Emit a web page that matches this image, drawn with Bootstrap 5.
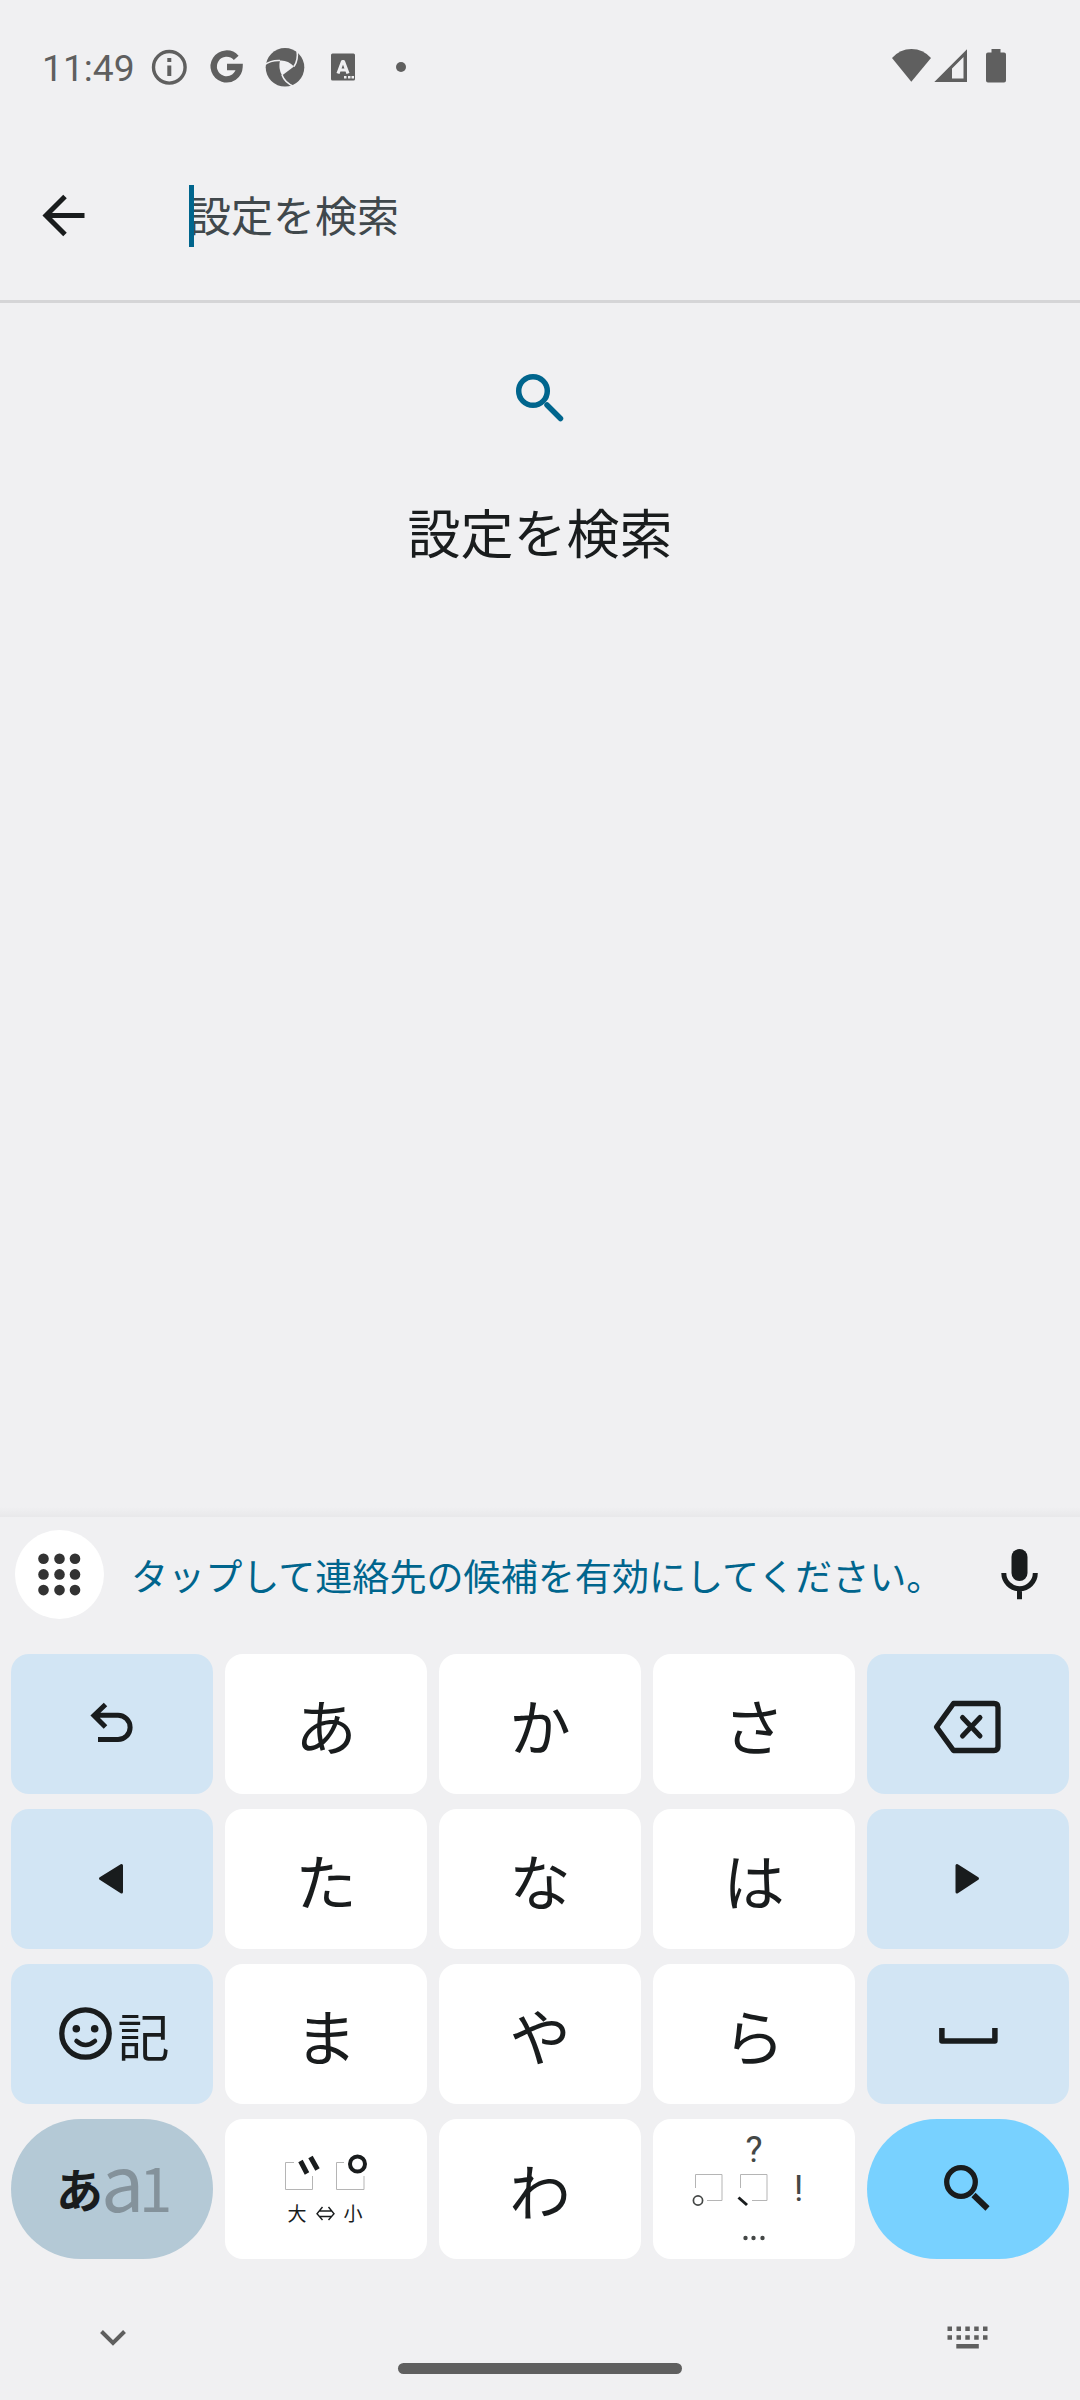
<!DOCTYPE html>
<html lang="ja">
<head>
<meta charset="utf-8">
<meta name="viewport" content="width=device-width, initial-scale=1">
<title>設定を検索</title>
<link href="https://cdn.jsdelivr.net/npm/bootstrap@5.3.0/dist/css/bootstrap.min.css" rel="stylesheet">
<style>
  body { background:#f0f0f2; font-family:Roboto,"Noto Sans CJK JP",sans-serif; color:#191c1d; }
  svg { display:block; flex:none; }
  .screen { width:1080px; height:2400px; overflow:hidden; }
  .status { height:134px; padding-left:42px; color:#5f5f5f; }
  .clock { font-size:37.2px; line-height:44px; width:93px; padding-top:1px; }
  .jp { font-family:"Noto Sans CJK JP",sans-serif; white-space:nowrap; }
  .toolbar { height:169px; padding-bottom:2px; border-bottom:3px solid #d5d5d7; }
  .query { font-size:42px; line-height:58px; height:62px; color:#40484c; margin-left:104px; }
  .caret { left:0; top:0; width:5px; height:62px; background:#00658d; }
  .empty-state { height:1214px; padding-top:54px; background:linear-gradient(to bottom,#f0f0f2 calc(100% - 10px),#e8e8ea); }
  .headline { font-size:53px; line-height:78px; margin-top:55px; }
  .suggest { height:137px; padding-top:13px; padding-left:15px; color:#00658d; }
  .apps { width:89px; height:89px; }
  .hint { font-size:37.1px; line-height:54px; margin-left:27px; margin-top:18px; }
  .keys { padding:0 11px; display:grid; grid-template-columns:repeat(5,202px); gap:15px 12px; }
  .key { height:140px; border:0; border-radius:18px; background:#fff; color:#191c1d; font-size:61.5px; line-height:140px; padding:0; }
  .kana { padding-top:1px; line-height:139px; }
  .key-fn { background:#d2e5f4; }
  .key-mode { background:#b4c9d6; border-radius:70px; }
  .key-go { background:#78d1ff; border-radius:70px; }
  .navbar-sys { height:141px; color:#5f5f5f; }
</style>
</head>
<body>
<main class="screen d-flex flex-column">
  <header class="status d-flex align-items-center">
    <span class="clock">11:49</span>
    <svg width="70" height="48" viewBox="135 43 70 48"><circle cx="169.3" cy="67.3" r="15.8" fill="none" stroke="currentColor" stroke-width="3.4"/><path fill="currentColor" d="M167.3 58h4v4h-4zM167.3 65.5h4V76h-4z"/></svg>
    <svg width="55" height="48" viewBox="205 43 55 48"><path fill="none" stroke="currentColor" stroke-width="6.4" d="M236.2 57.8A12.9 12.9 0 1 0 239.5 67H227"/></svg>
    <svg width="60" height="48" viewBox="260 43 60 48"><circle cx="285" cy="67.3" r="19.3" fill="currentColor"/><path fill="#f0f0f2" d="M280 60.500Q288 60 294 66.500L282 75.500Q278 68 280 60.500z"/><path fill="none" stroke="#f0f0f2" stroke-width="1.600" d="M297 50Q298.500 60 294 66.500M264 65Q271 60 280 60.500M282 75Q285 83 294 86.500"/></svg>
    <svg width="60" height="48" viewBox="320 43 60 48"><rect x="331" y="53.500" width="24" height="27" rx="1.500" fill="currentColor"/><path fill="none" stroke="#f0f0f2" stroke-width="3.200" stroke-linejoin="round" d="M338 73.500L342.500 61.500h1L348 73.500M340 70h6"/><path fill="#f0f0f2" d="M344 76h2.500v2.500h-2.500zM348 76h2.500v2.500h-2.500zM351.500 76h2.500v2.500h-2.500z"/></svg>
    <svg width="40" height="48" viewBox="380 43 40 48"><circle cx="401" cy="67" r="5" fill="currentColor"/></svg>
    <svg class="ms-auto" width="200" height="48" viewBox="880 43 200 48" fill="currentColor"><path d="M911.300 81.700L892 58Q900 49 911.500 49T931 58z"/><path fill-rule="evenodd" d="M934.300 82L967 49.300V82zM952 68.500V78.500H963.500V57z"/><path d="M991.500 49h9v3.500h3.500q2 0 2 2V80.500q0 2-2 2H988q-2 0-2-2V54.500q0-2 2-2h3.500z"/></svg>
  </header>
  <div class="toolbar d-flex align-items-center">
    <svg width="85" height="80" viewBox="0 176 85 80"><path fill="none" stroke="#191c1d" stroke-width="5" d="M84.500 215.500H46M65 196.500L46 215.500 65 234.500"/></svg>
    <div class="query jp position-relative">設定を検索<span class="caret position-absolute"></span></div>
  </div>
  <section class="empty-state d-flex flex-column align-items-center">
    <svg width="80" height="80" viewBox="500 357 80 80" fill="none" stroke="#00658d" stroke-width="5.500"><circle cx="533" cy="391" r="14.300"/><path stroke-linecap="round" d="M547 405L560.500 418.500"/></svg>
    <div class="headline jp">設定を検索</div>
  </section>
  <section class="suggest d-flex align-items-start">
    <div class="apps rounded-circle bg-white"><svg width="89" height="89" viewBox="0 0 89 89" fill="#333"><g id="r"><circle cx="28.500" cy="28.700" r="5.300"/><circle cx="44.500" cy="28.700" r="5.300"/><circle cx="60" cy="28.700" r="5.300"/></g><use href="#r" y="15.700"/><use href="#r" y="31.400"/></svg></div>
    <div class="hint jp">タップして連絡先の候補を有効にしてください。</div>
    <svg class="ms-auto" width="90" height="90" viewBox="990 1530 90 90"><rect x="1011.500" y="1549" width="16" height="32" rx="8" fill="#191c1d"/><path fill="none" stroke="#191c1d" stroke-width="5" d="M1003.800 1573a15.500 15.500 0 0 0 31.500 0M1019.500 1588v11.300"/></svg>
  </section>
  <section class="keys jp">
    <button class="key key-fn"><svg width="202" height="140" fill="none" stroke="#191c1d" stroke-width="5"><path d="M87 85.500H107A12 12 0 0 0 107 61.300H84M94.500 50.500L83 61.500 94.500 73"/></svg></button>
    <button class="key kana">あ</button><button class="key kana">か</button><button class="key kana">さ</button>
    <button class="key key-fn"><svg width="202" height="140" fill="none" stroke="#191c1d" stroke-width="5.300"><path stroke-linejoin="round" d="M86.500 49.500H127q4 0 4 4V92.500q0 4-4 4H86.500L69.500 73z"/><path stroke-linecap="round" stroke-width="5" d="M95.500 63.500L113 82M113 63.500L95.500 82"/></svg></button>

    <button class="key key-fn"><svg width="202" height="140" fill="#191c1d" stroke="#191c1d" stroke-width="3" stroke-linejoin="round"><path d="M89.500 69.500L110.500 56.500V83z"/></svg></button>
    <button class="key kana">た</button><button class="key kana">な</button><button class="key kana">は</button>
    <button class="key key-fn"><svg width="202" height="140" fill="#191c1d" stroke="#191c1d" stroke-width="3" stroke-linejoin="round"><path d="M110.500 69.500L90 56.500V83z"/></svg></button>

    <button class="key key-fn"><svg width="202" height="140" fill="none" stroke="#191c1d" stroke-width="5.300"><circle cx="74.500" cy="69.500" r="23.700"/><path stroke-linecap="round" stroke-width="4.500" d="M65.500 77Q74.500 85 84 77"/><g fill="#191c1d" stroke="none"><circle cx="65.300" cy="64.800" r="3.800"/><circle cx="83.700" cy="64.800" r="3.800"/></g><text x="106.500" y="93" font-size="52" fill="#191c1d" stroke="none">記</text></svg></button>
    <button class="key kana">ま</button><button class="key kana">や</button><button class="key kana">ら</button>
    <button class="key key-fn"><svg width="202" height="140" fill="none" stroke="#191c1d" stroke-width="5.500" stroke-linejoin="round"><path d="M74.900 64V76.900H127.900V64"/></svg></button>

    <button class="key key-mode"><svg width="202" height="140" fill="#191c1d"><text x="45" y="89" font-size="47"><tspan font-weight="700">あ</tspan><tspan x="90" y="93" font-size="77" fill="#84929b">a</tspan><tspan x="128" y="93" font-size="60" fill="#84929b">1</tspan></text></svg></button>
    <button class="key"><svg width="202" height="140" fill="none"><path stroke="#b5b5b5" d="M69 43.500H60.500V70.500H87.500V57M119 43.500H111.500V70.500H139V57"/><path stroke="#191c1d" stroke-width="5" d="M75.500 42L82 54.500M85.500 38L92.500 50.500"/><circle cx="132.500" cy="45" r="7.500" stroke="#191c1d" stroke-width="4"/><g fill="#191c1d" font-size="19"><text x="62.500" y="102">大</text><text x="118.500" y="102">小</text></g><path stroke="#191c1d" stroke-width="1.400" d="M94.500 92h12M94.500 97.500h12M97.500 88L92 94.700 97.500 101M103.500 88L109 94.700 103.500 101"/></svg></button>
    <button class="key kana">わ</button>
    <button class="key"><svg width="202" height="140" fill="none"><g fill="#444746" font-family="Roboto" font-size="36"><text x="92.500" y="43">?</text><text x="141" y="82">!</text></g><path stroke="#b5b5b5" d="M42.500 69V55.500H69V81.500H54M87.500 69V55.500H114V81.500H99"/><circle cx="45" cy="81.500" r="4.600" stroke="#444746" stroke-width="1.700"/><path stroke="#191c1d" stroke-width="3" d="M85.500 78.500L94 86"/><g fill="#444746"><circle cx="92.500" cy="119" r="2.200"/><circle cx="100.500" cy="119" r="2.200"/><circle cx="109.500" cy="119" r="2.200"/></g></svg></button>
    <button class="key key-go"><svg width="202" height="140" fill="none" stroke="#191c1d" stroke-width="5.300"><circle cx="94" cy="63" r="14.300"/><path stroke-width="6" d="M106.500 76L120.500 89.500"/></svg></button>
  </section>
  <footer class="navbar-sys">
    <svg width="1080" height="141" viewBox="0 2259 1080 141" fill="currentColor"><path fill="none" stroke="currentColor" stroke-width="4" d="M101.500 2331.500L113 2343 124.500 2331.500"/><rect x="398" y="2363" width="284" height="11" rx="5.500"/><g id="k"><path d="M947.500 2326.500h4.500v4.500h-4.500zM956.500 2326.500h4.500v4.500h-4.500zM965.300 2326.500h4.500v4.500h-4.500zM974.200 2326.500h4.500v4.500h-4.500zM983 2326.500h4.500v4.500h-4.500z"/></g><use href="#k" y="8.800"/><rect x="956.300" y="2344" width="22.500" height="4.500"/></svg>
  </footer>
</main>
<script src="https://cdn.jsdelivr.net/npm/bootstrap@5.3.0/dist/js/bootstrap.bundle.min.js"></script>
</body>
</html>
